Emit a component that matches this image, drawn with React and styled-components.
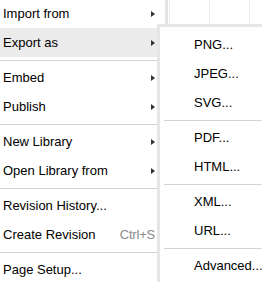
import styled, { createGlobalStyle } from 'styled-components';

const GlobalStyle = createGlobalStyle`
  html, body {
    margin: 0;
    padding: 0;
    overflow: hidden;
    background: #fff;
  }
`;

const Canvas = styled.div`
  position: relative;
  width: 262px;
  height: 282px;
  overflow: hidden;
  font-family: 'Liberation Sans', Arial, sans-serif;
  font-size: 13px;
  color: #000;
  background-color: #fff;
  background-image: linear-gradient(90deg, #ececec 1px, transparent 1px);
  background-size: 40px 100%;
  background-position: 9px 0;
`;

const Menu = styled.div`
  width: 165px;
  height: 290px;
  margin-top: -1px;
  background: #fff;
  border-right: 3px solid #e3e3e3;
`;

const Item = styled.div`
  display: flex;
  align-items: center;
  height: 29px;
  padding: ${(p) => (p.$sub ? '0 8px 0 34px' : '0 8px 0 3px')};
  background: ${(p) => (p.$active ? '#ebebeb' : 'transparent')};
  white-space: nowrap;
  cursor: default;
`;

const Label = styled.span`
  flex: 1;
`;

const Shortcut = styled.span`
  color: #8a8a8a;
  margin-right: 2px;
  letter-spacing: -0.2px;
`;

const Arrow = styled.span`
  width: 0;
  height: 0;
  margin-right: 2px;
  border-left: 4px solid #333;
  border-top: 3.5px solid transparent;
  border-bottom: 3.5px solid transparent;
`;

const Separator = styled.hr`
  height: 1px;
  border: 0;
  margin: 3px 0 2px ${(p) => (p.$sub ? '4px' : '0')};
  background: #d4d4d4;
`;

const SubMenu = styled.div`
  position: absolute;
  left: 157px;
  top: 24px;
  width: 130px;
  height: 280px;
  padding-top: 3px;
  background: #fff;
  border-left: 3px solid #e6e6e6;
  border-top: 3px solid #e6e6e6;
`;

const mainItems = [
  { label: 'Import from', sub: true },
  { label: 'Export as', sub: true, active: true },
  '-',
  { label: 'Embed', sub: true },
  { label: 'Publish', sub: true },
  '-',
  { label: 'New Library', sub: true },
  { label: 'Open Library from', sub: true },
  '-',
  { label: 'Revision History...' },
  { label: 'Create Revision', shortcut: 'Ctrl+S' },
  '-',
  { label: 'Page Setup...' },
];

const exportItems = ['PNG...', 'JPEG...', 'SVG...', '-', 'PDF...', 'HTML...', '-', 'XML...', 'URL...', '-', 'Advanced...'];

const App = () => {
  return (
    <Canvas>
      <GlobalStyle />
      <Menu>
        {mainItems.map((item, i) =>
          item === '-' ? (
            <Separator key={i} />
          ) : (
            <Item key={i} $active={item.active}>
              <Label>{item.label}</Label>
              {item.shortcut && <Shortcut>{item.shortcut}</Shortcut>}
              {item.sub && <Arrow />}
            </Item>
          )
        )}
      </Menu>
      <SubMenu>
        {exportItems.map((label, i) =>
          label === '-' ? (
            <Separator key={i} $sub />
          ) : (
            <Item key={i} $sub>
              <Label>{label}</Label>
            </Item>
          )
        )}
      </SubMenu>
    </Canvas>
  );
};

export default App;
